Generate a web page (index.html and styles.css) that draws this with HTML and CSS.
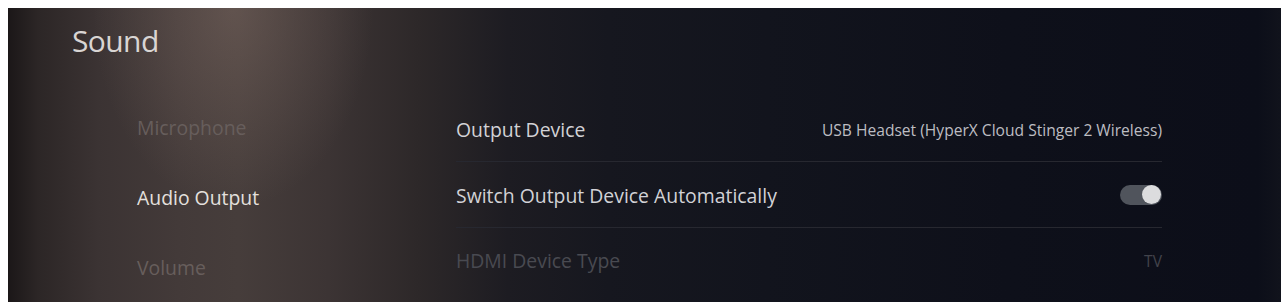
FILE: index.html
```html
<!DOCTYPE html>
<html lang="en">
<head>
<meta charset="utf-8">
<title>Sound</title>
<link rel="stylesheet" href="styles.css">
</head>
<body>
<div class="panel">
  <h1 class="title">Sound</h1>
  <div class="body">
    <nav class="nav">
      <div class="nav-item dim">Microphone</div>
      <div class="nav-item active">Audio Output</div>
      <div class="nav-item dim">Volume</div>
    </nav>
    <div class="list">
      <div class="row">
        <span class="label">Output Device</span>
        <span class="value">USB Headset (HyperX Cloud Stinger 2 Wireless)</span>
      </div>
      <div class="row">
        <span class="label">Switch Output Device Automatically</span>
        <span class="toggle"><span class="knob"></span></span>
      </div>
      <div class="row disabled">
        <span class="label">HDMI Device Type</span>
        <span class="value">TV</span>
      </div>
    </div>
  </div>
</div>
</body>
</html>
```

FILE: styles.css
```css
html, body {
  margin: 0;
  padding: 0;
  background: #ffffff;
}

body {
  padding: 8px 6px 4px 8px;
  font-family: "Open Sans", "Noto Sans", sans-serif;
}

.panel {
  height: 294px;
  overflow: hidden;
  background:
    radial-gradient(ellipse 140px 200px at 225px 0px, rgba(150, 126, 116, 0.34), rgba(150, 126, 116, 0) 100%),
    linear-gradient(90deg, #1b1718 0px, #2c2626 30px, #3b3333 90px, #433a39 170px, #463d3b 230px, #3c3434 320px, #2d2829 410px, #1d1c22 500px, #16171f 600px, #12141d 760px, #0e101a 1000px, #0c0e19 1250px, #11131c 1273px);
}

.title {
  margin: 0;
  padding: 15px 0 0 64px;
  height: 62px;
  box-sizing: border-box;
  font-weight: 400;
  font-size: 30px;
  letter-spacing: -0.6px;
  color: #d9d5d3;
  line-height: 36px;
}

.body {
  display: flex;
}

.nav {
  width: 319px;
  padding-left: 129px;
  padding-top: 23px;
  display: flex;
  flex-direction: column;
}

.nav-item {
  height: 70px;
  line-height: 70px;
  font-size: 19.4px;
}

.nav-item.dim {
  color: #675e5c;
}

.nav-item.active {
  color: #e4e0de;
}

.list {
  width: 706px;
  padding-top: 26px;
  display: flex;
  flex-direction: column;
}

.row {
  height: 65px;
  display: flex;
  align-items: center;
  justify-content: space-between;
  border-bottom: 1px solid #272830;
}

.row:last-child {
  border-bottom: none;
}

.label {
  font-size: 19.4px;
  color: #d2d2d6;
  padding-top: 2px;
}

.value {
  font-size: 15.6px;
  color: #bdbdc2;
  padding-top: 2px;
}

.disabled .label {
  color: #494a51;
  padding-top: 0;
}

.disabled .value {
  color: #42434b;
  padding-top: 0;
}

.toggle {
  width: 42px;
  height: 20px;
  border-radius: 10px;
  background: #50545c;
  display: flex;
  align-items: center;
  justify-content: flex-end;
}

.knob {
  width: 19px;
  height: 19px;
  border-radius: 50%;
  background: #dcdcde;
  margin-right: 1px;
}
```
